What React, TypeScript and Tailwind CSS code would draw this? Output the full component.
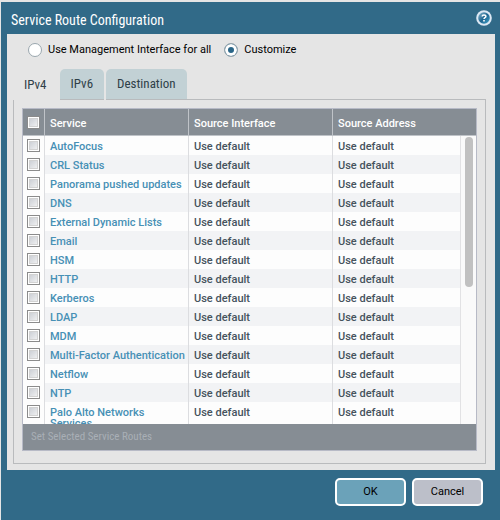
import { useState } from "react";

const services = [
    "AutoFocus",
    "CRL Status",
    "Panorama pushed updates",
    "DNS",
    "External Dynamic Lists",
    "Email",
    "HSM",
    "HTTP",
    "Kerberos",
    "LDAP",
    "MDM",
    "Multi-Factor Authentication",
    "Netflow",
    "NTP",
    "Palo Alto Networks Services",
]

const tabs = ["IPv4", "IPv6", "Destination"]

const narrow = "font-['Roboto_Condensed','Roboto',sans-serif]"

const CheckBox = ({ label }: { label: string }) => (
    <input
        type="checkbox"
        aria-label={label}
        className="block mx-auto size-[13px] appearance-none border border-[#8b8b8b] bg-linear-to-br from-[#c4c8cf] to-[#f8f8f8] shadow-[inset_0_0_0_1px_#ffffff,inset_0_0_0_2px_#d2d2d2] checked:from-[#316a88] checked:to-[#6ba2b9]"
    />
)

const Radio = ({ label, checked, onChange }: { label: string, checked: boolean, onChange: () => void }) => (
    <label className="flex items-center gap-[6px]">
        <input
            type="radio"
            name="mode"
            checked={checked}
            onChange={onChange}
            className="size-[14px] appearance-none rounded-full border border-[#9aa7ae] bg-white checked:bg-[#2a6688] checked:shadow-[inset_0_0_0_3px_#ffffff]"
        />
        {label}
    </label>
)

const HelpIcon = () => (
    <svg width="16" height="16" viewBox="0 0 16 16" aria-hidden="true">
        <defs>
            <linearGradient id="help" x1="0" y1="0" x2="1" y2="1">
                <stop offset="0" stopColor="#8db9cf" />
                <stop offset="0.5" stopColor="#1f6691" />
                <stop offset="1" stopColor="#3fa3cb" />
            </linearGradient>
        </defs>
        <circle cx="8" cy="8" r="7.8" fill="#dce8f4" />
        <circle cx="8" cy="8" r="5.8" fill="url(#help)" />
        <path d="M6.2 6.6C6.2 5.4 7 4.9 8 4.9c1.1 0 1.9.6 1.9 1.5 0 1.3-1.9 1.3-1.9 2.6" fill="none" stroke="#fff" strokeWidth="1.5" />
        <rect x="7.2" y="10" width="1.6" height="1.5" fill="#fff" />
    </svg>
)

const App = () => {
    const [mode, setMode] = useState("customize")
    const [tab, setTab] = useState("IPv4")

    return (
        <div className="bg-[#e5e5e5] pt-[2px] pl-px font-['Roboto',sans-serif] text-[11px]">
            <section className="bg-[#316a88] pl-[6px] pr-[5px] pb-[14px]">
                <header className="flex h-8 items-start justify-between pt-2 pl-1 pr-[3px]">
                    <h1 className={`${narrow} text-[14px] leading-5 text-white`}>Service Route Configuration</h1>
                    <button aria-label="Help"><HelpIcon /></button>
                </header>

                <div className="bg-[#e5e5e5] px-[6px] pt-2 pb-[6px]">
                    <div className="flex gap-[13px] pl-[15px] leading-4 text-black">
                        <Radio label="Use Management Interface for all" checked={mode === "all"} onChange={() => setMode("all")} />
                        <Radio label="Customize" checked={mode === "customize"} onChange={() => setMode("customize")} />
                    </div>

                    <div className="mt-[11px] flex">
                        <div role="tablist" className={`${narrow} flex gap-[2px] text-[13px] leading-[30px] text-[#2f4048]`}>
                            {tabs.map((name) => (
                                <button
                                    key={name}
                                    role="tab"
                                    aria-selected={tab === name}
                                    onClick={() => setTab(name)}
                                    className={name === tab ? "px-[11px]" : "rounded-t-[5px] bg-[#c2d1d5] border-b border-[#b9bbbd] px-[11px]"}
                                >
                                    {name}
                                </button>
                            ))}
                        </div>
                        <div className="mr-[3px] grow border-b border-[#b9bbbd]"></div>
                    </div>

                    <div className="mr-[3px] border border-t-0 border-[#b9bbbd] px-2 pt-2 pb-3">
                        <div className="border border-[#b7bac6] bg-[#fdfdfd]">
                            <div className="relative max-h-[315px] overflow-hidden">
                                <table className="w-full table-fixed border-separate border-spacing-0 text-left font-medium leading-[11px]">
                                    <colgroup>
                                        <col className="w-[22px]" />
                                        <col className="w-[144px]" />
                                        <col className="w-[144px]" />
                                        <col />
                                        <col className="w-[15px]" />
                                    </colgroup>
                                    <thead>
                                        <tr className="h-[27px] bg-[#868d94] text-white *:border-b *:border-[#bfc3c8]">
                                            <th className="border-r"><CheckBox label="Select all" /></th>
                                            <th className="border-r pt-[2px] pl-[5px] font-medium">Service</th>
                                            <th className="border-r pt-[2px] pl-[5px] font-medium">Source Interface</th>
                                            <th className="pt-[2px] pl-[5px] font-medium">Source Address</th>
                                            <th></th>
                                        </tr>
                                    </thead>
                                    <tbody className="align-top text-[#46535d]">
                                        {services.map((service) => (
                                            <tr key={service} className="h-[19px] even:bg-[#f2f3f5]">
                                                <td className="border-r border-[#dcdde0] bg-[#fdfdfd] pt-[3px]"><CheckBox label={service} /></td>
                                                <td className="border-r border-[#dcdde0] pt-[5px] pl-[5px]"><a href="#" className="text-[#4790b5]">{service}</a></td>
                                                <td className="border-r border-[#dcdde0] pt-[5px] pl-[5px]">Use default</td>
                                                <td className="border-r border-[#e2e2e4] pt-[5px] pl-[5px]">Use default</td>
                                                <td className="bg-[#fafafa]"></td>
                                            </tr>
                                        ))}
                                    </tbody>
                                </table>
                                <div className="absolute right-[3px] top-7 h-[150px] w-2 rounded-full bg-[#c1c1c1]"></div>
                            </div>
                            <div className="h-[26px] bg-[#868d94] pl-2 leading-[26px]">
                                <button disabled className={`${narrow} block text-[11px] text-[#a9afb6]`}>Set Selected Service Routes</button>
                            </div>
                        </div>
                    </div>
                </div>

                <footer className="flex justify-end gap-[6px] pt-2 pr-3 text-black">
                    <button className="h-7 w-[71px] rounded-[5px] border-2 border-white bg-[#6ba2b9]">OK</button>
                    <button className="h-7 w-[71px] rounded-[5px] border-2 border-white bg-[#bcbfc9]">Cancel</button>
                </footer>
            </section>
        </div>
    )
}

export default App;
